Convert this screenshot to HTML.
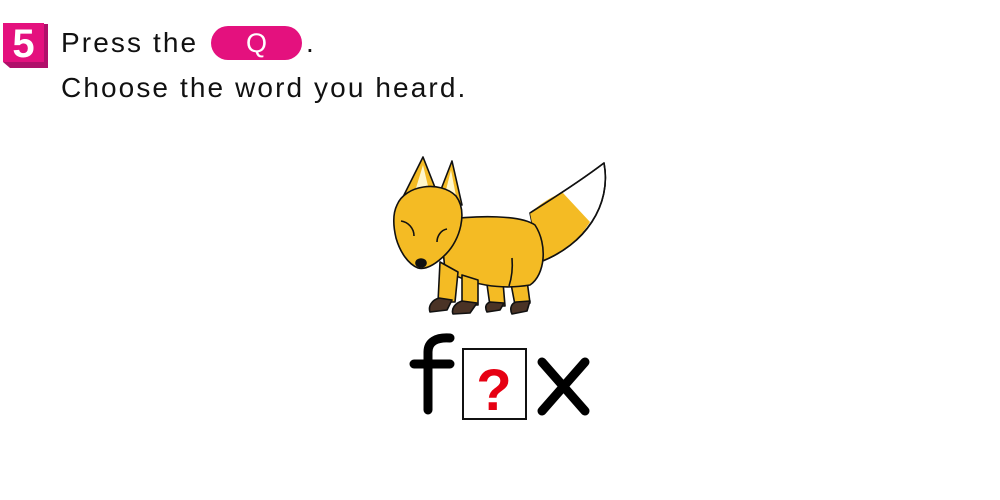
<!DOCTYPE html>
<html><head><meta charset="utf-8"><style>
body{margin:0;width:1000px;height:500px;background:#fff;position:relative;overflow:hidden;font-family:"Liberation Sans",sans-serif}
.t{position:absolute;left:61px;font-size:28px;color:#111;letter-spacing:2.1px}
</style></head><body>
<svg width="48" height="48" style="position:absolute;left:0;top:20px" viewBox="0 0 48 48">
<polygon points="6,4 48,4 48,48 10,48 3,42" fill="#b0106a"/>
<rect x="3" y="3" width="41" height="39" fill="#e4117e"/>
<text x="23.5" y="37" font-family="Liberation Sans" font-weight="bold" font-size="40" fill="#fff" text-anchor="middle">5</text>
</svg>
<div class="t" style="top:27px">Press the</div>
<div style="position:absolute;left:211px;top:26px;width:91px;height:34px;border-radius:17px;background:#e4117e;color:#fff;font-size:27px;text-align:center;line-height:34px">Q</div>
<div class="t" style="left:306px;top:27px">.</div>
<div class="t" style="top:72px">Choose the word you heard.</div>
<svg width="1000" height="500" style="position:absolute;left:0;top:0" viewBox="0 0 1000 500">
<g stroke="#111" stroke-width="1.6" stroke-linejoin="round">
<path d="M530,213 C550,200 575,185 604,163 C612,205 585,245 540,262 Z" fill="#fff"/>
<path d="M530,213 C545,200 555,195 563,193 L590,222 C575,245 560,255 540,262 Z" fill="#f4bb24" stroke="none"/>
<path d="M530,213 C550,200 575,185 604,163 C612,205 585,245 540,262" fill="none"/>
<path d="M485,270 L490,306 L505,306 L502,270Z M508,268 L515,305 L530,303 L525,265 Z" fill="#f4bb24"/>
<path d="M440,220 C480,215 520,215 535,225 C548,245 545,275 530,285 C500,290 470,285 445,270 Z" fill="#f4bb24"/>
<path d="M440,262 L438,302 L455,302 L458,272 Z M462,275 L462,305 L478,305 L478,280 Z" fill="#f4bb24"/>
<path d="M439,298 C432,300 428,306 430,312 L447,310 L452,300 Z M462,301 C455,303 451,309 453,314 L470,313 L477,303 Z M490,302 C485,304 485,308 487,312 L500,310 L504,303 Z M516,302 C510,304 510,310 512,314 L527,311 L530,301 Z" fill="#4a3326"/>
<path d="M404,195 L423,157 L436,190 Z M440,192 L452,161 L462,205 Z" fill="#f4bb24"/>
<path d="M416,188 L423,165 L428,186 Z M446,190 L451,170 L456,196 Z" fill="#fff7cc" stroke="none"/>
<path d="M397,205 C405,185 440,180 456,196 C468,212 460,240 446,254 C436,264 426,270 418,268 C408,264 400,252 396,238 C393,225 393,213 397,205 Z" fill="#f4bb24"/>
<path d="M401,221 C408,222 414,228 414,236 M447,229 C441,230 437,236 437,242" fill="none"/>
<ellipse cx="421" cy="263" rx="5" ry="4" fill="#111"/>
<path d="M512,258 C513,270 511,280 509,286" fill="none"/>
</g>
<path d="M428,410 L428,352 C428,342 436,337 450,338 M414,364 L450,364" stroke="#000" stroke-width="9" stroke-linecap="round" fill="none"/>
<rect x="463" y="349" width="63" height="70" fill="#fff" stroke="#111" stroke-width="2"/>
<text x="494" y="410" font-family="Liberation Sans" font-weight="bold" font-size="58" fill="#e60012" text-anchor="middle">?</text>
<path d="M542,362 L585,411 M585,362 L542,411" stroke="#000" stroke-width="9" stroke-linecap="round"/>
</svg>
</body></html>
